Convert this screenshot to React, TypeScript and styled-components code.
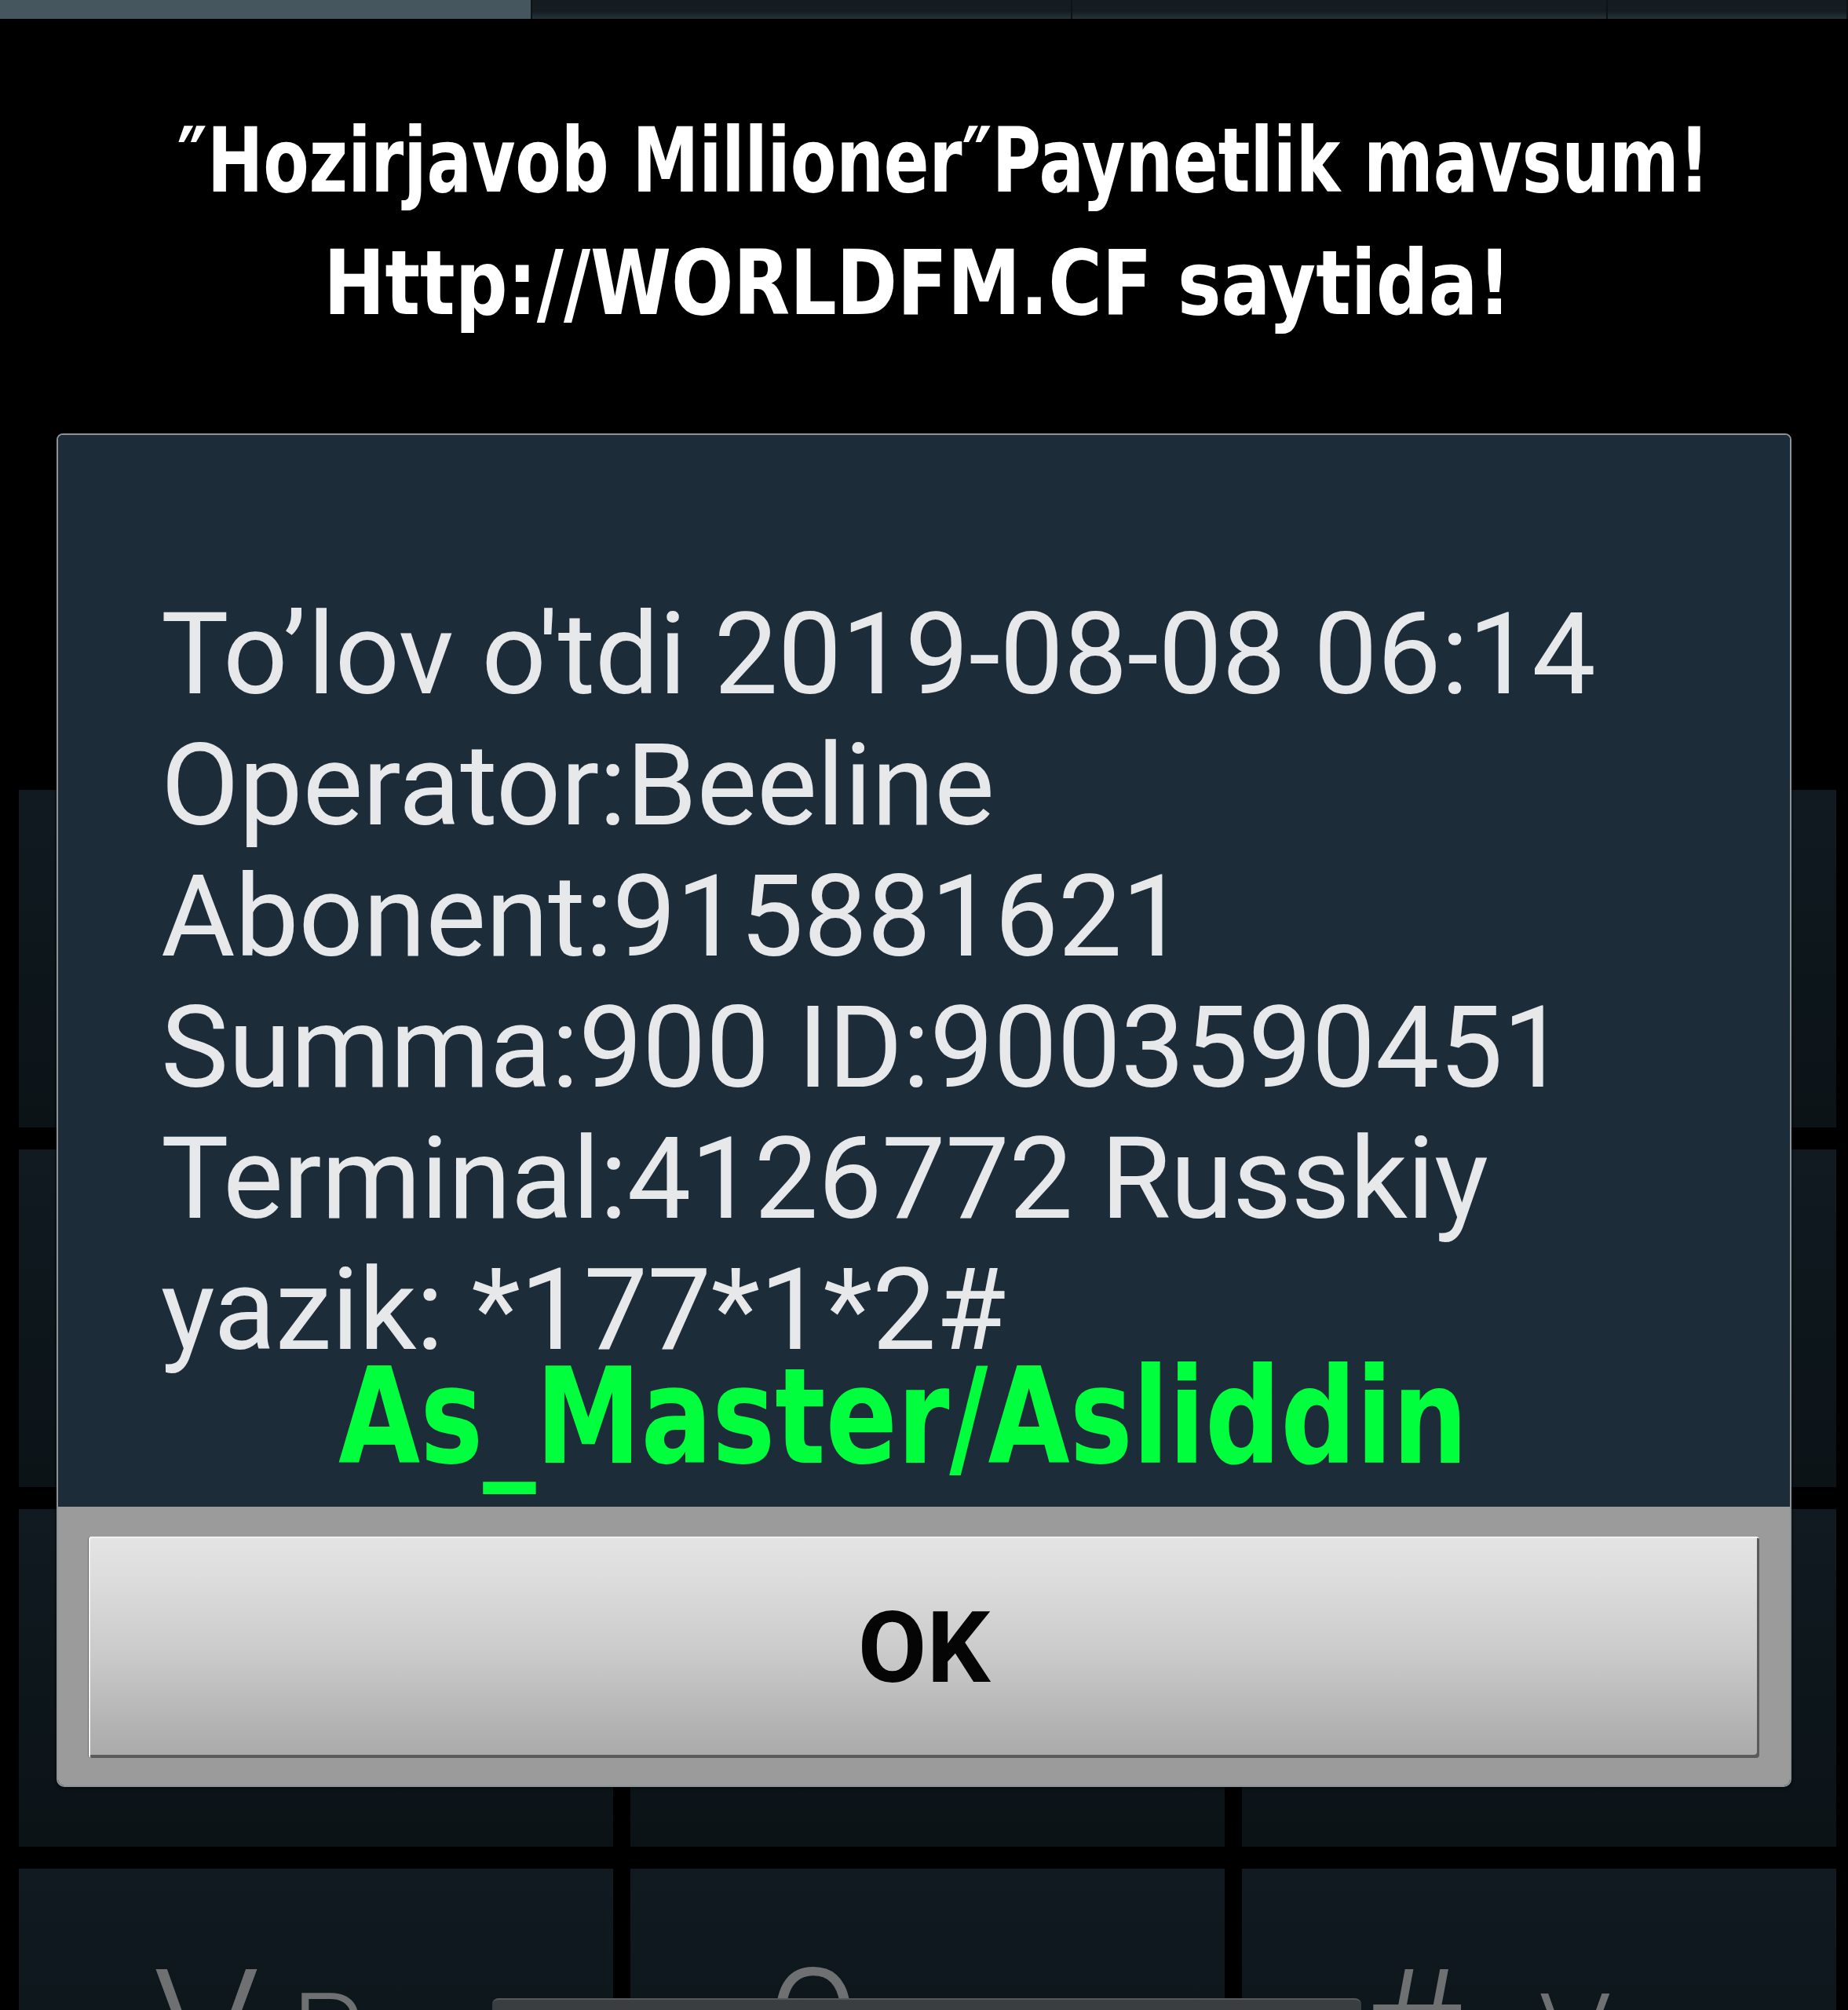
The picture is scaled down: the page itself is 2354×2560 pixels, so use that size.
import styled, { createGlobalStyle } from 'styled-components'

const GlobalStyle = createGlobalStyle`
  html, body {
    margin: 0;
    padding: 0;
    background: #000;
  }
  body {
    font-family: Roboto, "Liberation Sans", sans-serif;
  }
`

const Screen = styled.div`
  position: relative;
  width: 2354px;
  height: 2560px;
  overflow: hidden;
  background: #000;
  display: flex;
  flex-direction: column;
`

const TabBar = styled.div`
  display: flex;
  height: 24px;
  flex-shrink: 0;
`

const Tab = styled.div<{ $width?: number; $active?: boolean }>`
  flex: ${(p) => (p.$width ? `0 0 ${p.$width}px` : '1 1 auto')};
  background: ${(p) =>
    p.$active ? '#46565f' : 'linear-gradient(#151b21 0%, #161d22 60%, #26323a 100%)'};
  border-right: 2px solid #0e1317;
`

const Keypad = styled.div`
  margin: 982px 15px 0 24px;
  display: grid;
  grid-template-columns: repeat(3, 1fr);
  grid-auto-rows: 430px;
  column-gap: 22px;
  row-gap: 28px;
`

const Key = styled.div<{ $indent?: number }>`
  background: linear-gradient(180deg, #101a20 0%, #0d161b 50%, #0b1317 100%);
  display: flex;
  align-items: flex-start;
  gap: 40px;
  padding: 100px 0 0 ${(p) => p.$indent ?? 170}px;
  color: #6e7071;
  overflow: hidden;
`

const KeyGlyph = styled.span`
  font: 300 220px/1 Roboto, "Liberation Sans", sans-serif;
`

const KeySub = styled.span<{ $gap?: number }>`
  font: 300 150px/1 Roboto, "Liberation Sans", sans-serif;
  margin: 40px 0 0 ${(p) => p.$gap ?? 0}px;
`

const Overlay = styled.div`
  position: absolute;
  inset: 0;
  display: flex;
  flex-direction: column;
  align-items: center;
`

const Caption = styled.div`
  margin-top: 127px;
  font: 700 114px/156px "DejaVu Sans Condensed", "DejaVu Sans", sans-serif;
  color: #fff;
  text-align: center;
`

const CaptionLine = styled.div<{ $scale: number; $shift?: number }>`
  white-space: nowrap;
  transform: translateX(${(p) => p.$shift ?? 0}px) scaleX(${(p) => p.$scale});
`

const Dialog = styled.div`
  margin-top: 113px;
  width: 2206px;
  border: 2px solid #8e9397;
  border-radius: 8px 8px 10px 10px;
  overflow: hidden;
  box-shadow: 0 2px 4px rgba(0, 0, 0, 0.6);
`

const Body = styled.div`
  box-sizing: border-box;
  height: 1365px;
  padding: 196px 60px 0 131px;
  background: #1d2c39;
`

const Message = styled.div`
  font: 400 145px/167px Roboto, "Liberation Sans", sans-serif;
  letter-spacing: -0.4px;
  color: #e6e8e9;
  white-space: pre;
`

const Signature = styled.div`
  margin: 3px 0 0 226px;
  font: 700 169px/100px "DejaVu Sans Condensed", "DejaVu Sans", sans-serif;
  color: #00ff3c;
  white-space: nowrap;
  transform: scaleX(0.885);
  transform-origin: left center;
`

const ButtonPanel = styled.div`
  background: #9b9b9b;
  padding: 38px 39px 35px;
`

const OkButton = styled.button`
  display: flex;
  align-items: center;
  justify-content: center;
  width: 100%;
  height: 282px;
  border: none;
  border-radius: 4px;
  background: linear-gradient(180deg, #e4e4e4 0%, #dcdcdc 20%, #c9c9c9 55%, #b3b3b3 85%, #aaaaaa 100%);
  box-shadow:
    inset 2px 2px 0 #f2f2f2,
    inset -3px -4px 0 #5a5a5a,
    -1px 0 0 #6a6a6a;
  font: 700 127px/1 Roboto, "Liberation Sans", sans-serif;
  color: #050505;
  padding: 0;
  cursor: pointer;
`

const HintBar = styled.div`
  position: absolute;
  left: 627px;
  bottom: 0;
  width: 1107px;
  height: 13px;
  background: #3a3e41;
  border-top: 2px solid #55595c;
  border-radius: 8px 8px 0 0;
`

const lines = [
  'To’lov o\'tdi 2019-08-08 06:14',
  'Operator:Beeline',
  'Abonent:915881621',
  'Summa:900 ID:9003590451',
  'Terminal:4126772 Russkiy',
  'yazik: *177*1*2#',
]

export default function App() {
  return (
    <>
      <GlobalStyle />
      <Screen>
        <TabBar>
          <Tab $width={676} $active />
          <Tab $width={686} />
          <Tab $width={680} />
          <Tab />
        </TabBar>
        <Keypad>
          {Array.from({ length: 9 }).map((_, i) => (
            <Key key={i} />
          ))}
          <Key $indent={171}>
            <KeyGlyph>V</KeyGlyph>
            <KeySub>P</KeySub>
          </Key>
          <Key $indent={172}>
            <KeyGlyph>0</KeyGlyph>
            <KeySub>+</KeySub>
          </Key>
          <Key $indent={150}>
            <KeyGlyph>#</KeyGlyph>
            <KeySub $gap={60}>V</KeySub>
          </Key>
        </Keypad>
        <Overlay>
          <Caption>
            <CaptionLine $scale={0.83} $shift={25}>″Hozirjavob Millioner″Paynetlik mavsum!</CaptionLine>
            <CaptionLine $scale={0.91} $shift={-8}>Http://WORLDFM.CF saytida!</CaptionLine>
          </Caption>
          <Dialog>
            <Body>
              <Message>{lines.join('\n')}</Message>
              <Signature>As_Master/Asliddin</Signature>
            </Body>
            <ButtonPanel>
              <OkButton>OK</OkButton>
            </ButtonPanel>
          </Dialog>
        </Overlay>
        <HintBar />
      </Screen>
    </>
  )
}
